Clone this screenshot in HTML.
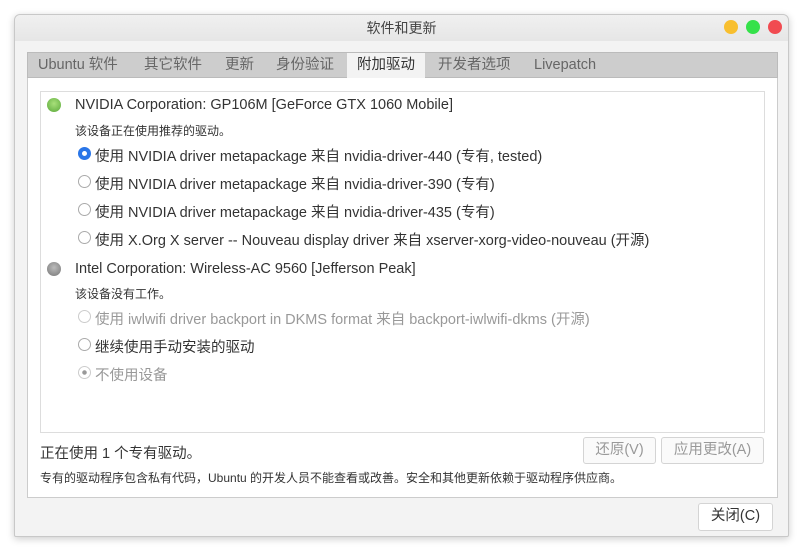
<!DOCTYPE html>
<html><head><meta charset="utf-8"><style>
*{margin:0;padding:0;box-sizing:border-box}
body{width:803px;height:551px;background:#fff;font-family:"Liberation Sans","Noto Sans CJK SC",sans-serif;color:#333;position:relative;overflow:hidden}
.win{position:absolute;left:14px;top:14px;width:775px;height:523px;background:#f3f3f3;border:1px solid #c8c8c8;border-radius:6px 6px 2px 2px;box-shadow:0 2px 8px rgba(0,0,0,.2)}
.title{position:absolute;left:0;top:0;width:100%;height:26px;background:linear-gradient(#f0f0f0,#e6e6e6);border-radius:6px 6px 0 0;text-align:center;font-size:14px;line-height:26px;color:#444}
.dot{position:absolute;top:5px;width:14px;height:14px;border-radius:50%}
.tabs{position:absolute;left:12px;top:37px;width:751px;height:26px;background:#cdcdcd;border:1px solid #bbb}
.tab{position:absolute;top:0;height:25px;line-height:25px;font-size:14.5px;color:#666}
.tab.act{background:#f3f3f3;color:#333;padding:0 10px}
.panel{position:absolute;left:12px;top:63px;width:751px;height:420px;background:#fff;border:1px solid #ccc;border-top:none}
.list{position:absolute;left:12px;top:13px;width:725px;height:342px;border:1px solid #ddd}
.t{position:absolute;white-space:nowrap;font-size:14.5px;color:#333}
.s{font-size:12px}
.g{color:#999}
.r{position:absolute;width:13px;height:13px;border-radius:50%;border:1px solid #aaa;background:#fff}
.led{position:absolute;width:14px;height:14px;border-radius:50%}
.btn{position:absolute;height:27px;border:1px solid #d4d4d4;border-radius:3px;background:#fafafa;font-size:14.5px;text-align:center;line-height:25px}
</style></head><body>
<div class="win">
<div class="title">软件和更新
<div class="dot" style="left:709px;background:#f8bf2f"></div>
<div class="dot" style="left:731px;background:#35e14a"></div>
<div class="dot" style="left:753px;background:#f14b51"></div>
</div>
<div class="tabs">
<div class="tab" style="left:10px">Ubuntu 软件</div>
<div class="tab" style="left:116px">其它软件</div>
<div class="tab" style="left:197px">更新</div>
<div class="tab" style="left:248px">身份验证</div>
<div class="tab act" style="left:319px">附加驱动</div>
<div class="tab" style="left:410px">开发者选项</div>
<div class="tab" style="left:506px">Livepatch</div>
</div>
<div class="panel">
<div class="list">
<div class="led" style="left:6px;top:6px;background:radial-gradient(circle at 50% 40%,#a8e07a,#5aa83a)"></div>
<div class="t" style="left:34px;top:5px">NVIDIA Corporation: GP106M [GeForce GTX 1060 Mobile]</div>
<div class="t s" style="left:34px;top:30px">该设备正在使用推荐的驱动。</div>
<div class="r" style="left:37px;top:55px;border:4px solid #2a76e8"></div>
<div class="t" style="left:54px;top:53px">使用 NVIDIA driver metapackage 来自 nvidia-driver-440 (专有, tested)</div>
<div class="r" style="left:37px;top:83px"></div>
<div class="t" style="left:54px;top:81px">使用 NVIDIA driver metapackage 来自 nvidia-driver-390 (专有)</div>
<div class="r" style="left:37px;top:111px"></div>
<div class="t" style="left:54px;top:109px">使用 NVIDIA driver metapackage 来自 nvidia-driver-435 (专有)</div>
<div class="r" style="left:37px;top:139px"></div>
<div class="t" style="left:54px;top:137px">使用 X.Org X server -- Nouveau display driver 来自 xserver-xorg-video-nouveau (开源)</div>
<div class="led" style="left:6px;top:170px;background:radial-gradient(circle at 50% 40%,#bbb,#777)"></div>
<div class="t" style="left:34px;top:169px">Intel Corporation: Wireless-AC 9560 [Jefferson Peak]</div>
<div class="t s" style="left:34px;top:193px">该设备没有工作。</div>
<div class="r" style="left:37px;top:218px;border-color:#ccc"></div>
<div class="t g" style="left:54px;top:216px">使用 iwlwifi driver backport in DKMS format 来自 backport-iwlwifi-dkms (开源)</div>
<div class="r" style="left:37px;top:246px"></div>
<div class="t" style="left:54px;top:244px">继续使用手动安装的驱动</div>
<div class="r" style="left:37px;top:274px;border-color:#ccc;background:radial-gradient(circle,#999 0 2px,#fff 2.5px)"></div>
<div class="t g" style="left:54px;top:272px">不使用设备</div>
</div>
<div class="t" style="left:12px;top:364px">正在使用 1 个专有驱动。</div>
<div class="btn g" style="left:555px;top:359px;width:73px">还原(V)</div>
<div class="btn g" style="left:633px;top:359px;width:103px">应用更改(A)</div>
<div class="t s" style="left:12px;top:391px">专有的驱动程序包含私有代码，Ubuntu 的开发人员不能查看或改善。安全和其他更新依赖于驱动程序供应商。</div>
</div>
<div class="btn" style="left:683px;top:488px;width:75px;height:28px;background:#fff">关闭(C)</div>
</div>
</body></html>
